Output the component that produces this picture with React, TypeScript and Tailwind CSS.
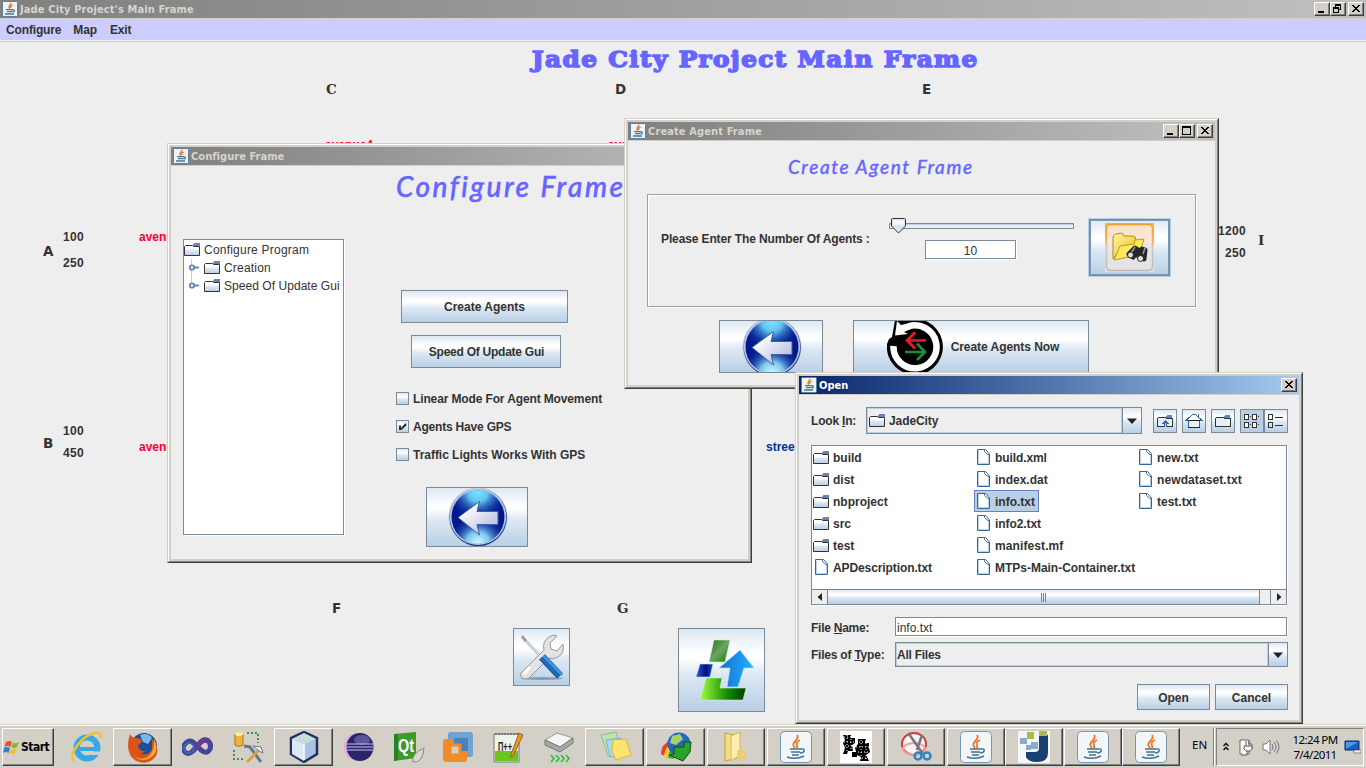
import React from "react";

type Kids = { children?: React.ReactNode };
const METAL = "bg-[linear-gradient(180deg,#dde8f3_0%,#ffffff_30%,#ffffff_36%,#dde8f3_55%,#b8cfe5_100%)]";

function JavaMark() {
  return (
    <svg width="16" height="16" viewBox="0 0 16 16" className="shrink-0">
      <rect x=".5" y=".5" width="15" height="15" rx="1" fill="#eef3f8" stroke="#5b7f9f" />
      <path d="M8.8 1.8C9.6 3.4 5.4 4.6 7.6 7.6M10.6 4.2C8 5.2 8.4 6 9 7" fill="none" stroke="#ef7b14" strokeWidth="1.4" />
      <path d="M4 8.6h7M5 10.6h5.5M10.5 9.2c2.6-1 2.6 1.4.2 2M3 13h9" fill="none" stroke="#4b7597" strokeWidth="1.3" />
    </svg>
  );
}

function CaptionButton({ kind }: { kind: "min" | "max" | "restore" | "close" }) {
  return (
    <div className="h-[14px] w-4 border border-t-white border-l-white border-r-[#404040] border-b-[#404040] bg-[#d4d0c8]">
      <svg width="14" height="12" viewBox="0 0 14 12" shapeRendering="crispEdges" className="block">
        <path d="M0 11.5h13.5V0" fill="none" stroke="#808080" />
        {kind === "min" && <path d="M3 8h6v2H3z" />}
        {kind === "max" && <path d="M2 1h9v9H2zM3 3v6h7V3z" fillRule="evenodd" />}
        {kind === "restore" && (
          <path d="M4 1h6v6H8v3H2V4h2zM5 3v1h3v2h1V3zM3 6v3h4V6z" fillRule="evenodd" />
        )}
        {kind === "close" && (
          <path d="M3 2h2v1h1v1h2V3h1V2h2v1h-1v1H9v1H8v1h1v1h1v1h1v1H9V8H8V7H6v1H5v1H3V8h1V7h1V6h1V5H5V4H4V3H3z" />
        )}
      </svg>
    </div>
  );
}

function Frame({ place, title, active, full, children }: Kids & { place: string; title: React.ReactNode; active?: boolean; full?: boolean }) {
  return (
    <section className={`absolute border border-t-[#d4d0c8] border-l-[#d4d0c8] border-r-[#404040] border-b-[#404040] ${place}`}>
      <div className="h-full border border-t-white border-l-white border-r-[#808080] border-b-[#808080] bg-[#d4d0c8] p-[2px]">
        <div className="flex h-full flex-col bg-[#eee]">
          <div
            className={`flex h-[19px] shrink-0 items-center border-b border-[#d4d0c8] pr-[2px] pl-[2px] ${
              active ? "bg-linear-to-r from-[#0a246a] to-[#a6caf0] text-white" : "bg-linear-to-r from-[#808080] to-[#c0c0c0] text-[#d8d4cc]"
            }`}
          >
            <JavaMark />
            {title}
            <div className="ml-auto flex">
              {full && <CaptionButton kind="min" />}
              {full && <CaptionButton kind="max" />}
              <div className="ml-[2px]"><CaptionButton kind="close" /></div>
            </div>
          </div>
          <div className="min-h-0 flex-1 overflow-hidden">{children}</div>
        </div>
      </div>
    </section>
  );
}

const CAP = "mt-[2px] font-['DejaVu_Sans_Condensed','DejaVu_Sans',sans-serif] text-[11px] font-bold whitespace-nowrap leading-4";

function Metal({ size, children }: Kids & { size: string }) {
  return (
    <button className={`flex shrink-0 items-center justify-center overflow-hidden border border-[#7a8a99] p-0 whitespace-nowrap ${METAL} ${size}`}>
      {children}
    </button>
  );
}

function Folder() {
  return (
    <svg width="16" height="14" viewBox="0 0 16 14" className="block shrink-0">
      <defs>
        <linearGradient id="fold" x2="0" y2="1"><stop offset=".3" stopColor="#fff" /><stop offset=".5" stopColor="#dde8f3" /><stop offset="1" stopColor="#b8cfe5" /></linearGradient>
      </defs>
      <path d="M.5 12.5V3.500L1.500 2.500H8.500L9.500 3.500H15.5V12.5z" fill="url(#fold)" stroke="#333" />
      <path d="M9 3V1.500L10.500 0H16v3z" fill="#6382bf" />
    </svg>
  );
}

function Doc() {
  return (
    <svg width="13" height="16" viewBox="0 0 13 16" className="block shrink-0">
      <path d="M.5.5H8.5L12.5 5V15.5H.5z" fill="#fff" stroke="#336699" />
      <path d="M1.5 1.500v13h10V6" fill="none" stroke="#b8cfe5" />
      <path d="M7.5 1v1.5L9 4l2 1.5h1" fill="none" stroke="#336699" strokeWidth=".9" />
    </svg>
  );
}

function BackArrow() {
  return (
    <svg width="60" height="60" viewBox="0 0 60 60" className="ml-px shrink-0">
      <defs>
        <radialGradient id="orbTop" cx=".5" cy=".02" r=".55"><stop offset="0" stopColor="#7fe3ff" /><stop offset=".35" stopColor="#60c4f2" /><stop offset="1" stopColor="#0c2f9c" stopOpacity="0" /></radialGradient>
        <radialGradient id="orbLow" cx=".5" cy="1" r=".55"><stop offset="0" stopColor="#d8fbff" /><stop offset=".4" stopColor="#7cc9ee" /><stop offset="1" stopColor="#0c2f9c" stopOpacity="0" /></radialGradient>
        <linearGradient id="orbArrow" x2="1" y2="1"><stop offset=".2" stopColor="#fff" /><stop offset="1" stopColor="#a6b0da" /></linearGradient>
      </defs>
      <circle cx="30" cy="30" r="29.5" fill="#c3c9d2" />
      <circle cx="30.2" cy="30.5" r="28.6" fill="#22357c" />
      <circle cx="30" cy="29.8" r="28.2" fill="#b4c9ef" />
      <circle cx="30" cy="30" r="26.500" fill="#04188c" />
      <circle cx="30" cy="30" r="26.8" fill="url(#orbTop)" />
      <circle cx="30" cy="30" r="26.8" fill="url(#orbLow)" />
      <path d="M10 30.5 31.5 14.5 29 24.5H50V37.5H29L31.5 48z" fill="url(#orbArrow)" stroke="#3b5fa8" strokeWidth="1" strokeLinejoin="round" />
    </svg>
  );
}

function TreeHandle({ last }: { last?: boolean }) {
  return (
    <svg width="20" height="18" viewBox="0 0 20 18" className="shrink-0">
      <path d={last ? "M7.5 0V8" : "M7.5 0V18"} stroke="#b8cfe5" />
      <path d="M10 8.500h6" stroke="#b8cfe5" />
      <circle cx="8" cy="8.500" r="2.200" fill="#fff" stroke="#6382bf" strokeWidth="1.8" />
      <path d="M10 8.500H14.500" stroke="#6382bf" strokeWidth="2" />
    </svg>
  );
}

function ConfigureFrame() {
  return (
    <Frame place="left-[167px] top-[143px] h-[420px] w-[585px]" full title={<span className={`ml-[2px] ${CAP} tracking-[0.05px]`}>Configure Frame</span>}>
      <div className="flex h-[73px] items-start pl-[225px] pt-[2px]">
        <h2 className="font-['Lato',cursive] text-[28px] leading-[36px] font-medium whitespace-nowrap text-[#6666ff] italic tracking-[2.5px] [-webkit-text-stroke:0.5px_#6666ff]">Configure Frame</h2>
      </div>
      <div className="flex pl-3">
        <div className="h-[296px] w-[161px] border border-[#7a8a99] bg-white pt-[1px] text-[12px] font-normal shadow-[1px_1px_0_#fff]">
          <div className="flex h-[18px] items-center"><Folder /><span className="ml-1 tracking-[0.22px]">Configure Program</span></div>
          <div className="flex h-[18px] items-center"><TreeHandle /><Folder /><span className="ml-1 tracking-[0.2px]">Creation</span></div>
          <div className="flex h-[18px] items-center whitespace-nowrap"><TreeHandle last /><Folder /><span className="ml-1 tracking-[0.05px]">Speed Of Update Gui</span></div>
        </div>
        <div className="flex flex-col items-start pt-[51px] pl-[52px]">
          <div className="flex flex-col items-center gap-3 pl-[5px]">
            <Metal size="h-[33px] w-[167px]">Create Agents</Metal>
            <Metal size="ml-[3px] h-[33px] w-[150px] pl-px tracking-[-0.25px]">Speed Of Update Gui</Metal>
          </div>
          <div className="mt-[24px] flex flex-col gap-[15px]">
            {["Linear Mode For Agent Movement", "Agents Have GPS", "Traffic Lights Works With GPS"].map((t, i) => (
              <label key={t} className={`flex h-[13px] items-center whitespace-nowrap ${i === 2 ? "tracking-[-0.03px]" : i === 1 ? "tracking-[-0.2px]" : "tracking-[-0.13px]"}`}>
                <span className={`mr-1 block h-[13px] w-[13px] border border-[#7a8a99] ${METAL}`}>
                  {i === 1 && (
                    <svg width="11" height="11" viewBox="0 0 11 11" className="block"><path d="M2 4.500h2v2.500l4-4.500h1.500v2L4.500 9H2z" fill="#333" /></svg>
                  )}
                </span>
                {t}
              </label>
            ))}
          </div>
          <div className="mt-[26px] ml-[30px]"><Metal size="h-[60px] w-[102px]"><BackArrow /></Metal></div>
        </div>
      </div>
    </Frame>
  );
}

function FindFolder() {
  return (
    <svg width="49" height="49" viewBox="0 0 49 49">
      <defs>
        <linearGradient id="ff" x2="1" y2="1"><stop stopColor="#fff4a0" /><stop offset="1" stopColor="#e8c020" /></linearGradient>
        <linearGradient id="ffb" x2="0" y2="1"><stop stopColor="#f99a2c" /><stop offset=".4" stopColor="#f9b868" /><stop offset=".5" stopColor="#cfc8c6" /><stop offset="1" stopColor="#bdb9bb" /></linearGradient>
        <linearGradient id="ffi" x2="0" y2="1"><stop stopColor="#fde3c6" /><stop offset=".4" stopColor="#fbe9da" /><stop offset=".42" stopColor="#eae6ea" /><stop offset="1" stopColor="#e4e1e4" /></linearGradient>
      </defs>
      <rect width="49" height="49" fill="#ecdcd2" />
      <rect width="49" height="20" fill="#fbae55" />
      <rect x="1.500" y="1.500" width="46" height="46" rx="4" fill="url(#ffi)" stroke="url(#ffb)" strokeWidth="1.6" />
      <path d="M8 36V15q0-3 3-4l5-1q2 0 3 3l9 0q3 0 3 4l-1 6-14 2z" fill="url(#ff)" stroke="#b58d14" />
      <path d="M9 37 15 23l14-2 1-4 9-1-5 16z" fill="#ffe95c" stroke="#c19a1c" />
      <path d="M24 31l6-6 3 2-5 7zM34 34l3-8 3 1-1 9z" fill="#3a3a3c" stroke="#262626" strokeWidth="5" strokeLinejoin="round" />
      <path d="m30 24-4 6m14-5-2 6" stroke="#9a9a9e" strokeWidth="1.6" />
      <circle cx="25.500" cy="32" r="3" fill="#dcdde9" stroke="#222" /><circle cx="35.500" cy="35.5" r="3" fill="#dcdde9" stroke="#222" />
    </svg>
  );
}

function Recycle() {
  return (
    <svg width="56" height="56" viewBox="0 0 56 56" className="shrink-0">
      <path d="M0 25A28 28 0 1 0 17 2L8 1 5 18 2 20z" />
      <path d="M6.500 27A21.500 21.500 0 1 0 21 7.500" fill="none" stroke="#fff" strokeWidth="6.500" />
      <path d="M8 16.500 10 2l4 4 9-2 1 6-7 3 4 2z" fill="#fff" />
      <path d="M39 21.500H20m8-8-8 8 8 8" fill="none" stroke="#ec1c24" strokeWidth="2.6" />
      <path d="M18 33h20m-8-8.500 8 8.500-8 8" fill="none" stroke="#16913a" strokeWidth="2.6" />
    </svg>
  );
}

function AgentFrame() {
  return (
    <Frame place="left-[624px] top-[118px] h-[271px] w-[595px]" full title={<span className={`ml-[2px] ${CAP} tracking-[0.12px]`}>Create Agent Frame</span>}>
      <div className="flex h-[53px] items-center pb-[2px] pl-[160px]">
        <h2 className="font-['Lato',cursive] text-[19px] leading-6 font-medium whitespace-nowrap text-[#6666ff] italic tracking-[1.6px] [-webkit-text-stroke:0.3px_#6666ff]">Create Agent Frame</h2>
      </div>
      <div className="ml-[19px] flex h-[113px] w-[549px] border border-[#a0a0a0] pl-[13px] shadow-[1px_1px_0_#fff,inset_1px_1px_0_#fff]">
        <div className="w-[228px] pt-[36px] leading-4 tracking-[-0.12px] whitespace-nowrap">Please Enter The Number Of Agents :</div>
        <div className="w-[199px] pt-[22px]">
          <svg width="185" height="18" viewBox="0 0 185 18" className="block">
            <path d="M.5 6.5h184v5H.5z" fill="#eee" stroke="#7a8a99" />
            <path d="M1 7.5h183" stroke="#b8cfe5" />
            <path d="M2.5 2.5q0-1 1-1h12q1 0 1 1V9L9.5 16 2.5 9z" fill="#dce7f4" stroke="#333" />
            <path d="M4 3.500h11v4H4z" fill="#f6fafe" />
          </svg>
          <div className="mt-[5px] ml-[36px] flex h-[19px] w-[91px] items-center justify-center border border-[#7a8a99] bg-white pt-[2px] text-[12px] font-normal shadow-[1px_1px_0_#fff]">10</div>
        </div>
        <div className="mt-[23px] h-[59px] w-[83px] border border-[#b8cfe5]">
          <Metal size="h-[57px] w-[81px] shadow-[inset_0_0_0_1px_#7a9ab8]"><FindFolder /></Metal>
        </div>
      </div>
      <div className="mt-[13px] flex gap-[30px] pl-[91px]">
        <Metal size="h-[53px] w-[104px]"><BackArrow /></Metal>
        <Metal size="h-[53px] w-[236px] tracking-[-0.05px]"><Recycle /><span className="mr-[-5px] ml-2 pr-px">Create Agents Now</span></Metal>
      </div>
    </Frame>
  );
}

function ToolIcon({ n }: { n: number }) {
  return (
    <svg width="18" height="18" viewBox="0 0 18 18" shapeRendering="crispEdges" className="shrink-0">
      {(n === 0 || n === 2) && <path d="M1.5 14.5v-8L3 5.5h6.5l1 1h6v8z" fill="#e6eef7" stroke="#333" />}
      {(n === 0 || n === 2) && <path d="M10 6V4l1-1h5v3z" fill="#6382bf" />}
      {n === 0 && <path d="M8 15v-3H6v-1h1v-1h1V9h1V8h1v1h1v1h1v1h1v1h-2v3z" fill="#336699" />}
      {n === 0 && <path d="M9 15v-4h1v4z" fill="#b8cfe5" />}
      {n === 1 && <path d="M3.500 8v7.500h11V8" fill="#e8f0f8" stroke="#336699" />}
      {n === 1 && <path d="M1 8.500 7.500 2.500h3L17 8.500zM13.500 2v3" fill="#fff" stroke="#336699" />}
      {n === 1 && <path d="M3 8.500h12M3 15.500h12" stroke="#222" />}
      {n === 3 && [3, 11].map((y) => [3, 11].map((x) => <path key={`${x}-${y}`} d={`M${x - 1.5} ${y - 0.5}h4v5h-4zM${x + 4} ${y + 1.5}h1`} fill="#fff" stroke="#333" />))}
      {n === 4 && [3, 11].map((y) => <path key={y} d={`M1.500 ${y - 0.5}h4v5h-4zM8 ${y + 2.5}h8`} fill="none" stroke="#333" />)}
    </svg>
  );
}

function Tri({ d }: { d: string }) {
  return <svg width="12" height="12" viewBox="0 0 12 12"><path d={d} fill="#222" /></svg>;
}

function Combo({ size, children }: Kids & { size: string }) {
  return (
    <div className={`flex border border-[#7a8a99] ${size}`}>
      <div className="flex flex-1 items-center border border-[#b8cfe5]">{children}</div>
      <div className={`flex w-[19px] items-center justify-center border-l border-[#7a8a99] ${METAL}`}><Tri d="M1 3.500h10L6 9z" /></div>
    </div>
  );
}

const COLUMNS: [string, string, string][][] = [
  [["build", "", ""], ["dist", "", ""], ["nbproject", "", ""], ["src", "", ""], ["test", "", ""], ["APDescription.txt", "doc", "tracking-[-0.1px]"]],
  [["build.xml", "doc", "tracking-[-0.1px]"], ["index.dat", "doc", ""], ["info.txt", "doc", ""], ["info2.txt", "doc", "tracking-[-0.08px]"], ["manifest.mf", "doc", "tracking-[0.1px]"], ["MTPs-Main-Container.txt", "doc", "tracking-[-0.02px]"]],
  [["new.txt", "doc", "tracking-[0.1px]"], ["newdataset.txt", "doc", "tracking-[0.1px]"], ["test.txt", "doc", ""]],
];

function OpenDialog() {
  return (
    <Frame place="left-[795px] top-[372px] h-[352px] w-[508px]" active title={<span className={`ml-[2px] ${CAP}`}>Open</span>}>
      <div className="flex items-center pt-3 pl-3">
        <span className="w-[55px] tracking-[-0.2px]">Look <u>I</u>n:</span>
        <Combo size="h-[27px] w-[276px]"><span className="ml-px"><Folder /></span><span className="ml-1 tracking-[-0.1px]">JadeCity</span></Combo>
        <div className="ml-[11px] flex gap-[5px]">
          {[0, 1, 2].map((n) => <Metal key={n} size="h-6 w-6"><ToolIcon n={n} /></Metal>)}
          <div className="flex">
            <div className="flex h-6 w-6 items-center justify-center border border-[#7a8a99] bg-[#b8cfe5]"><ToolIcon n={3} /></div>
            <Metal size="h-6 w-6"><ToolIcon n={4} /></Metal>
          </div>
        </div>
      </div>
      <div className="mt-[11px] ml-3 flex h-[160px] w-[476px] flex-col border border-[#7a8a99] bg-white shadow-[1px_1px_0_#fff]">
        <div className="flex flex-1">
          {COLUMNS.map((col, c) => (
            <div key={c} className={c < 2 ? "w-[162px] shrink-0" : "flex-1"}>
              {col.map(([name, kind, spacing]) => (
                <div key={name} className="flex h-[22px]">
                  <div className={`flex items-center border pr-[3px] whitespace-nowrap ${c > 0 ? "pl-[2px]" : ""} ${name === "info.txt" ? "border-[#6382bf] bg-[#b8cfe5]" : "border-transparent"}`}>
                    <span className={`flex w-[18px] ${kind === "doc" ? "" : "mt-[2px]"} ${kind === "doc" && c === 0 ? "pl-[2px]" : ""}`}>{kind === "doc" ? <Doc /> : <Folder />}</span>
                    <span className={`mt-px ${c === 0 ? "ml-[2px]" : "ml-0"} ${spacing}`}>{name}</span>
                  </div>
                </div>
              ))}
            </div>
          ))}
        </div>
        <div className="flex h-[15px] shrink-0 border-t border-[#6382bf]">
          <div className="flex w-[15px] items-center justify-center bg-[#eee]"><Tri d="M8 2v8L3.500 6z" /></div>
          <div className={`flex w-[433px] items-center justify-center gap-px border-x border-[#6382bf] ${METAL}`}>
            <i className="h-[9px] w-px bg-[#6382bf]" /><i className="h-[9px] w-px bg-[#6382bf]" /><i className="h-[9px] w-px bg-[#6382bf]" />
          </div>
          <div className="w-[11px] border-r border-[#7a8a99] bg-[#eee]" />
          <div className="flex flex-1 items-center justify-center bg-[#eee]"><Tri d="M4 2v8l4.500-4z" /></div>
        </div>
      </div>
      <div className="mt-3 flex items-center pl-3">
        <span className="w-[84px] pt-[2px] tracking-[-0.25px]">File <u>N</u>ame:</span>
        <div className="flex h-[19px] w-[392px] items-center border border-[#7a8a99] bg-white pt-[2px] pl-px text-[12px] font-normal shadow-[1px_1px_0_#fff]">info.txt</div>
      </div>
      <div className="mt-[6px] flex items-center pl-3">
        <span className="w-[84px] tracking-[-0.22px] whitespace-nowrap">Files of <u>T</u>ype:</span>
        <Combo size="h-[25px] w-[393px]"><span className="tracking-[-0.25px]">All Files</span></Combo>
      </div>
      <div className="mt-[17px] flex justify-end gap-[5px] pr-[11px]">
        <Metal size="h-[26px] w-[73px] pt-px">Open</Metal>
        <Metal size="h-[26px] w-[73px] pt-px">Cancel</Metal>
      </div>
    </Frame>
  );
}

function Mark({ at, children, tone }: Kids & { at: string; tone?: string }) {
  return <span className={`absolute leading-4 whitespace-nowrap ${at} ${tone ?? ""}`}>{children}</span>;
}
const BIG = "font-['DejaVu_Sans',sans-serif] text-[13.5px]";
const BIGS = "font-['DejaVu_Serif',serif] text-[13.5px]";

function Tools() {
  return (
    <svg width="55" height="56" viewBox="0 0 55 56">
      <ellipse cx="28" cy="49.500" rx="21" ry="1.500" fill="#8f9aa6" />
      <path d="M8 8 29 30" stroke="#8d9297" strokeWidth="2.400" /><path d="M8 8 29 30" stroke="#e6e8ea" strokeWidth="1.200" /><path d="m8 7 4 5" stroke="#9b9b9b" strokeWidth="2.500" />
      <path d="M7 44 30 21q-2-9 5-13 4-3 8-1l-7 7 1 6 6 2 6-7q2 9-5 13-5 3-9 1L15 49q-4 2-7 0-3-2-1-5z" fill="#e3e3e4" stroke="#999" />
      <path d="m10 45 6-7" stroke="#fff" strokeWidth="3" />
      <path d="M28 28 46 47" stroke="#165fa8" strokeWidth="8" /><path d="M29.500 27 48 46" stroke="#3c96dd" strokeWidth="3" /><path d="M28 30 45 48" stroke="#2d84cf" strokeWidth="1" />
    </svg>
  );
}

function UpdateMark() {
  return (
    <svg width="85" height="82" viewBox="0 0 85 82" className="ml-[2px] shrink-0">
      <defs>
        <linearGradient id="g1" x2="1" y2="1"><stop stopColor="#1c6d14" /><stop offset=".5" stopColor="#6aa560" /><stop offset="1" stopColor="#118000" /></linearGradient>
        <linearGradient id="g2" x2="1"><stop stopColor="#a0ff40" /><stop offset=".6" stopColor="#118a00" /><stop offset="1" stopColor="#023f00" /></linearGradient>
        <linearGradient id="g3" x2="1"><stop stopColor="#1470d0" /><stop offset="1" stopColor="#22b2ff" /></linearGradient>
        <linearGradient id="g4" x2="1"><stop stopColor="#2858d8" /><stop offset=".6" stopColor="#000e88" /><stop offset="1" stopColor="#2050c0" /></linearGradient>
      </defs>
      <path d="M34 11H50L45 33H29z" fill="url(#g1)" stroke="#d5e5d8" strokeWidth=".6" />
      <path d="M20 35H33L30 48H16z" fill="url(#g4)" stroke="#d5def0" strokeWidth=".6" />
      <path d="M26 49H42L40 59H66L63 71H20z" fill="url(#g2)" stroke="#d5e5d8" strokeWidth=".6" />
      <path d="m60 21 14 18H64L58 58H47L50 39H39z" fill="url(#g3)" stroke="#b8e2ff" strokeWidth=".7" />
    </svg>
  );
}

function JavaApp() {
  return (
    <svg width="32" height="32" viewBox="0 0 32 32">
      <rect x=".5" y=".5" width="31" height="31" rx="4" fill="#f3f6f8" stroke="#7895ae" />
      <path d="M17 4c4 5-8 7-2 13M20 9c-6 3-2 4-3 8" fill="none" stroke="#ed7525" strokeWidth="1.800" />
      <path d="M10 18h11M11 21h9M12 24h7M21 18c5-1 4 4-1 4M7 26q9 3 17-1" fill="none" stroke="#42708e" strokeWidth="1.400" />
    </svg>
  );
}

const ICONS: Record<string, React.ReactNode> = {
  ie: <><circle cx="17" cy="17" r="10.500" fill="none" stroke="#35a9e6" strokeWidth="6" /><path d="M9 18h19" stroke="#35a9e6" strokeWidth="4" /><path d="M21 20.500h10v3.500H21z" fill="#d4d0c8" /><path d="M4 30C-3 25 12 3 27 1.500q5 0 3 6" fill="none" stroke="#f6c22c" strokeWidth="2.500" /></>,
  firefox: <><circle cx="17" cy="15" r="13" fill="#1f4f9a" /><path d="M13 4q8-3 12 3l-4 6-5-2z" fill="#7db8e8" /><path d="M3 3q2 4 6 4 6 0 6 4l-4 3q1 7 8 6l-5 3q8 2 11-5V8q8 9 4 17Q22 35 9 30-3 22 3 3z" fill="#d9541a" /><path d="M27 7q7 16-6 21-9 3-15-4 8 7 16 1 6-6 5-18z" fill="#fba92e" /></>,
  vs: <><path d="M3 13q5-6 10 0l6 6q6 5 9-1 2-7-4-9-4 0-8 5l-5 6q-5 5-9 0-2-4 1-7z" fill="none" stroke="#45449a" strokeWidth="5" /><path d="M11 20 18 12q4-5 9-2" fill="none" stroke="#6a3a90" strokeWidth="5" /><circle cx="7" cy="17" r="5" fill="none" stroke="#2f6fb4" strokeWidth="2" /></>,
  dev: <><path d="M3 3q4-3 8 0v11q-4 3-8 0z" fill="#e9b63c" stroke="#a87818" /><ellipse cx="7" cy="3" rx="4" ry="2" fill="#ffe9a0" /><path d="M15 2h11v10M2 19v9h10" fill="none" stroke="#3d9a3d" strokeWidth="2" strokeDasharray="2 2" /><path d="m12 15 6 1 11 15" fill="none" stroke="#67788a" strokeWidth="3" /><path d="M29 17 15 31" stroke="#d8a33c" strokeWidth="3" /><path d="m21 15 8 1 2 6-4-2z" fill="#eef2f6" stroke="#67788a" /></>,
  netbeans: <><path d="M16 1 29 7V23L16 31 3 23V7z" fill="#a8c2e6" stroke="#24305c" strokeWidth="2.500" /><path d="M16 2 28 8 16 13 4 8z" fill="#c6dcda" /><path d="M16 13v17L4 23V8z" fill="#dbe8f8" /><path d="M16 13v16" stroke="#fff" strokeWidth="1.500" /></>,
  eclipse: <><circle cx="15" cy="16" r="14" fill="#e2a8dc" /><ellipse cx="17" cy="16" rx="13.500" ry="14" fill="#2b2568" /><ellipse cx="19" cy="9" rx="8" ry="5" fill="#5b52a0" /><path d="M3 13h27M3 16h27M3 19h27" stroke="#c9c6ec" strokeWidth="1.200" /></>,
  qt: <><path d="M1 3 23 1V27L1 30z" fill="#3f9a2c" /><path d="M1 3h4v26l-4 1z" fill="#2f7f1f" /><text x="5" y="21" fontSize="19" fontWeight="700" textLength="16" lengthAdjust="spacingAndGlyphs" fill="#fff">Qt</text><path d="M20 31q-2-8 11-14-1 15-11 14z" fill="#d9dad8" stroke="#888" /></>,
  vmware: <><rect x="6" y="1" width="25" height="25" rx="3" fill="#6fa3d0" /><rect x="1" y="8" width="24" height="23" rx="3" fill="#f08c28" /><path d="M12 7h14v13H12z" fill="#4a83b8" /><path d="M8 14h10v10H8z" fill="#d4d0c8" stroke="#f08c28" strokeWidth="3" /></>,
  npp: <><path d="M2 3h25v28H2z" fill="#eef4ea" stroke="#777" /><path d="M3 20h23v10H3z" fill="#69c520" /><path d="M3 3h23" stroke="#777" strokeDasharray="2 1" strokeWidth="2" /><text x="6" y="20" fontSize="12" fontWeight="700" textLength="14" lengthAdjust="spacingAndGlyphs" fill="#222">П++</text><path d="M27 2 18 26l3-1L31 4z" fill="#e8972b" stroke="#9a5f18" /></>,
  drive: <><path d="m2 9 12-7 16 5-13 9z" fill="#f5f5f5" stroke="#999" /><path d="m2 9 15 7 13-9v5l-13 9-15-7z" fill="#a6a8aa" stroke="#777" /><path d="m8 24 3 3.500-3 3.500m5-7 3 3.500-3 3.500m5-7 3 3.500-3 3.500m5-7 3 3.500-3 3.500" fill="none" stroke="#35bf4c" strokeWidth="1.800" /></>,
  notes: <><path d="m2 4 15-3 5 16-13 8z" fill="#bfe3ae" stroke="#8fc07f" /><path d="m7 9 15-2 4 17-15 2z" fill="#a9d8f5" stroke="#78b2d8" /><path d="m14 9 13-1 5 16-15 5-4-9z" fill="#fbe36e" stroke="#d8b93c" /></>,
  idm: <><path d="M1 23Q1 13 11 9v7q-4 3-3 11z" fill="#e83c2e" /><path d="M4 25q1-10 9-13v5q-4 4-2 11z" fill="#ffd42c" /><path d="M8 27q0-8 6-11v12z" fill="#3fb24e" /><circle cx="19" cy="13" r="11.500" fill="#2866bd" /><path d="m12 5 8-2 3 5-7 6-6-2z" fill="#a4d26c" /><path d="M14 16h10V11l7 0-1 10-7 9-14-6 5-1z" fill="#2aa32c" stroke="#124e14" /></>,
  folder: <><path d="m5 2 13 3v22l-13 3z" fill="#f4dd80" stroke="#c8a640" /><path d="M11 5 20 1v23l-9 6z" fill="#ffeeb0" stroke="#d3b455" /><path d="M17 19h9v8l-9 4z" fill="#e8cf74" /></>,
  dance: <><rect width="32" height="32" fill="#fff" /><path d="M3 4h8v3h4v5l-3 2 1 6H8l-1 3H3l2-6-2-5 2-3zm15 4h8l-1 4h4v5l1 4-4 3 3 6h-9l1-4-4-2-2-7 3-4zM12 21h5v5h-5z" /><path d="M4 6h9M4 11h10M5 15h8M19 11h9M16 16h13M18 21h12M19 27h8M7 4v17M11 5v14M21 9v20M26 9v20" stroke="#fff" strokeDasharray="1 2" strokeWidth="1" /></>,
  snip: <><ellipse cx="14" cy="13" rx="12" ry="11" fill="#f4f4f4" stroke="#d53b3b" strokeWidth="2" /><ellipse cx="14" cy="18" rx="11" ry="6" fill="none" stroke="#e9a4a4" strokeWidth="2" /><path d="m9 3 14 20M22 4 17 19" stroke="#777" strokeWidth="2.500" /><circle cx="18" cy="25" r="3.500" fill="none" stroke="#2687c9" strokeWidth="2.500" /><circle cx="27" cy="25" r="3.500" fill="none" stroke="#2687c9" strokeWidth="2.500" /></>,
  u: <><rect width="32" height="32" fill="#f4f5f5" /><path d="M21 4h9v18q0 9-11 9-9 0-11-5v-5h9q4 0 4-4z" fill="#193f73" /><path d="M9 1h7v7H9zM21 0h8v5h-8z" fill="#a6bc4b" /><path d="M2 7h7v6H2zM13 11h7v7h-7zM8 14h5v5H8z" fill="#86acd0" /></>,
};

const TASKS: [string, string, boolean][] = [
  ["ie", "w-[58px] ml-px pl-[3px]", false], ["firefox", "w-[59px]", true], ["vs", "w-[50px] pl-[2px]", false], ["dev", "w-[52px]", false],
  ["netbeans", "w-[59px]", true], ["eclipse", "w-[52px]", false], ["qt", "w-[48px]", false], ["vmware", "w-[50px]", false],
  ["npp", "w-[50px]", false], ["drive", "w-[52px]", false], ["notes", "w-[59px]", true], ["idm", "w-[59px] ml-[2px]", true],
  ["folder", "w-[58px] ml-[2px]", true], ["java", "w-[58px] ml-[2px]", true], ["dance", "w-[58px] ml-[2px]", true],
  ["snip", "w-[58px] ml-[2px]", true], ["java", "w-[58px] ml-[2px]", true], ["u", "w-[58px]", true],
  ["java", "w-[58px] ml-px", true], ["java", "w-[58px]", true],
];
const RAISED = "border border-t-white border-l-white border-r-[#404040] border-b-[#404040] shadow-[inset_-1px_-1px_0_#808080]";

function Taskbar() {
  return (
    <footer className="flex h-11 shrink-0 items-start border-t border-[#d4d0c8] bg-[#d4d0c8] pt-[3px] pl-[2px] font-normal shadow-[inset_0_1px_0_#fff]">
      <div className={`flex h-[38px] w-[52px] items-center ${RAISED}`}>
        <svg width="17" height="17" viewBox="0 0 17 17" className="shrink-0">
          <path d="M3 3q3-2 6 0L7.500 8Q5 6 1.500 8z" fill="#e8542a" /><path d="M10 4q3 1 6-1l-2 5q-3 2-5.500 0z" fill="#7dbb2d" />
          <path d="M1 9q3-2 6 0l-1.500 5Q3 12 0 14z" fill="#2f83d6" /><path d="M8 10q3 1 6-1l-2 5q-3 2-5.500 0z" fill="#f5bf24" />
        </svg>
        <span className="ml-px font-['DejaVu_Sans_Condensed',sans-serif] text-[12px] font-bold tracking-[-0.500px] text-black">Start</span>
      </div>
      {TASKS.map(([k, w, raised], i) => (
        <div key={i} className={`flex h-[38px] shrink-0 items-center justify-center ${w} ${raised ? RAISED : ""}`}>
          {k === "java" ? <JavaApp /> : <svg width="32" height="32" viewBox="0 0 32 32">{ICONS[k]}</svg>}
        </div>
      ))}
      <span className="ml-3 pt-[9px] font-['Noto_Sans',sans-serif] text-[11.500px] leading-4 text-black">EN</span>
      <div className="ml-auto flex h-[38px] w-[153px] shrink-0 items-center border-l border-[#808080] shadow-[inset_1px_0_0_#fff]">
        <div className="ml-[2px] flex h-[38px] w-[148px] items-center border border-t-[#808080] border-l-[#808080] border-r-white border-b-white pl-[5px] text-black">
          <svg width="8" height="10" viewBox="0 0 8 10" fill="none" stroke="#111" strokeWidth="1.500"><path d="m1.500 4 2.500-2.500L6.500 4M1.500 8 4 5.500 6.500 8" /></svg>
          <svg className="ml-[8px]" width="17" height="18" viewBox="0 0 17 18"><path d="M2 2h9v4h3v5l-3 2v3H2z" fill="#fff" stroke="#666" /><path d="M8 3v5M11 3v5M6 8h8v3l-2 2H8l-2-2zM9 13v4H3" fill="#fff" stroke="#555" /></svg>
          <svg className="ml-[7px]" width="18" height="16" viewBox="0 0 18 16"><path d="M1 5h3l4-4v14l-4-4H1z" fill="#fff" stroke="#777" /><path d="M10 5q2 3 0 6M12 3q4 5 0 10M14.500 1.500q5 6 0 13" fill="none" stroke="#777" /></svg>
          <div className="ml-[10px] w-[50px] text-center font-['Noto_Sans',sans-serif] text-[11.500px] leading-[15px] tracking-[-0.600px] whitespace-nowrap">12:24 PM<br />7/4/2011</div>
          <svg className="ml-[4px]" width="17" height="14" viewBox="0 0 17 14"><path d="M1 1h14v9H1z" fill="#185fc0" stroke="#0a2c66" /><path d="M2 2h12L2 9z" fill="#4b9be8" /><path d="M10 10h7v3h-7z" fill="#eee" stroke="#555" strokeWidth=".6" /></svg>
        </div>
      </div>
    </footer>
  );
}

export default function App() {
  return (
    <div className="relative flex h-[768px] w-[1366px] flex-col overflow-hidden bg-[#eee] font-['Liberation_Sans',Arial,sans-serif] text-[12px] leading-4 font-bold text-[#333]">
      <header className="flex h-[18px] shrink-0 items-center bg-linear-to-r from-[#808080] to-[#c0c0c0] px-[2px] text-[#d8d4cc]">
        <JavaMark />
        <span className={`ml-[2px] ${CAP} tracking-[0.13px]`}>Jade City Project's Main Frame</span>
        <div className="ml-auto flex"><CaptionButton kind="min" /><CaptionButton kind="restore" /><div className="ml-[2px]"><CaptionButton kind="close" /></div></div>
      </header>
      <nav className="flex h-[24px] shrink-0 items-center gap-3 border-t border-b border-t-[#d4d0c8] border-b-[#c8c8c8] bg-[#ccccff] pl-[6px] tracking-[-0.15px] shadow-[inset_0_-1px_0_#eee]">
        <span>Configure</span><span>Map</span><span className="ml-[1px]">Exit</span>
      </nav>
      <main className="flex-1 pt-[2px]">
        <h1 className="ml-[532px] origin-left scale-x-[1.118] font-['DejaVu_Serif',serif] text-[22px] leading-[30px] font-bold whitespace-nowrap text-[#6666ff] tracking-[1.300px] [-webkit-text-stroke:1.500px_#6666ff]">Jade City Project Main Frame</h1>
        <Mark at={`left-[326px] top-[81px] ${BIGS}`}>C</Mark>
        <Mark at={`left-[615px] top-[81px] ${BIG}`}>D</Mark>
        <Mark at={`left-[922px] top-[81px] ${BIG}`}>E</Mark>
        <Mark at={`left-[43px] top-[243px] ${BIG}`}>A</Mark>
        <Mark at={`left-[43px] top-[435px] ${BIG}`}>B</Mark>
        <Mark at={`left-[332px] top-[600px] ${BIG}`}>F</Mark>
        <Mark at={`left-[617px] top-[600px] ${BIGS}`}>G</Mark>
        <Mark at={`left-[1258px] top-[232px] ${BIGS}`}>I</Mark>
        <Mark at="left-[63px] top-[229px] tracking-[0.3px]">100</Mark>
        <Mark at="left-[63px] top-[255px] tracking-[0.3px]">250</Mark>
        <Mark at="left-[63px] top-[423px] tracking-[0.3px]">100</Mark>
        <Mark at="left-[63px] top-[445px] tracking-[0.3px]">450</Mark>
        <Mark at="left-[1218px] top-[223px] tracking-[0.3px]">1200</Mark>
        <Mark at="left-[1225px] top-[245px] tracking-[0.3px]">250</Mark>
        <Mark at="left-[325px] top-[137px]" tone="text-[#ff0033]">avenue4</Mark>
        <Mark at="left-[608px] top-[137px]" tone="text-[#ff0033]">avenue5</Mark>
        <Mark at="left-[139px] top-[229px]" tone="text-[#ff0033]">avenue1</Mark>
        <Mark at="left-[139px] top-[439px]" tone="text-[#ff0033]">avenue2</Mark>
        <Mark at="left-[766px] top-[439px]" tone="text-[#003399]">street5</Mark>
        <div className="absolute top-[628px] left-[513px]"><Metal size="h-[58px] w-[57px]"><Tools /></Metal></div>
        <div className="absolute top-[628px] left-[678px]"><Metal size="h-[84px] w-[87px]"><UpdateMark /></Metal></div>
        <ConfigureFrame />
        <AgentFrame />
        <OpenDialog />
      </main>
      <Taskbar />
    </div>
  );
}
